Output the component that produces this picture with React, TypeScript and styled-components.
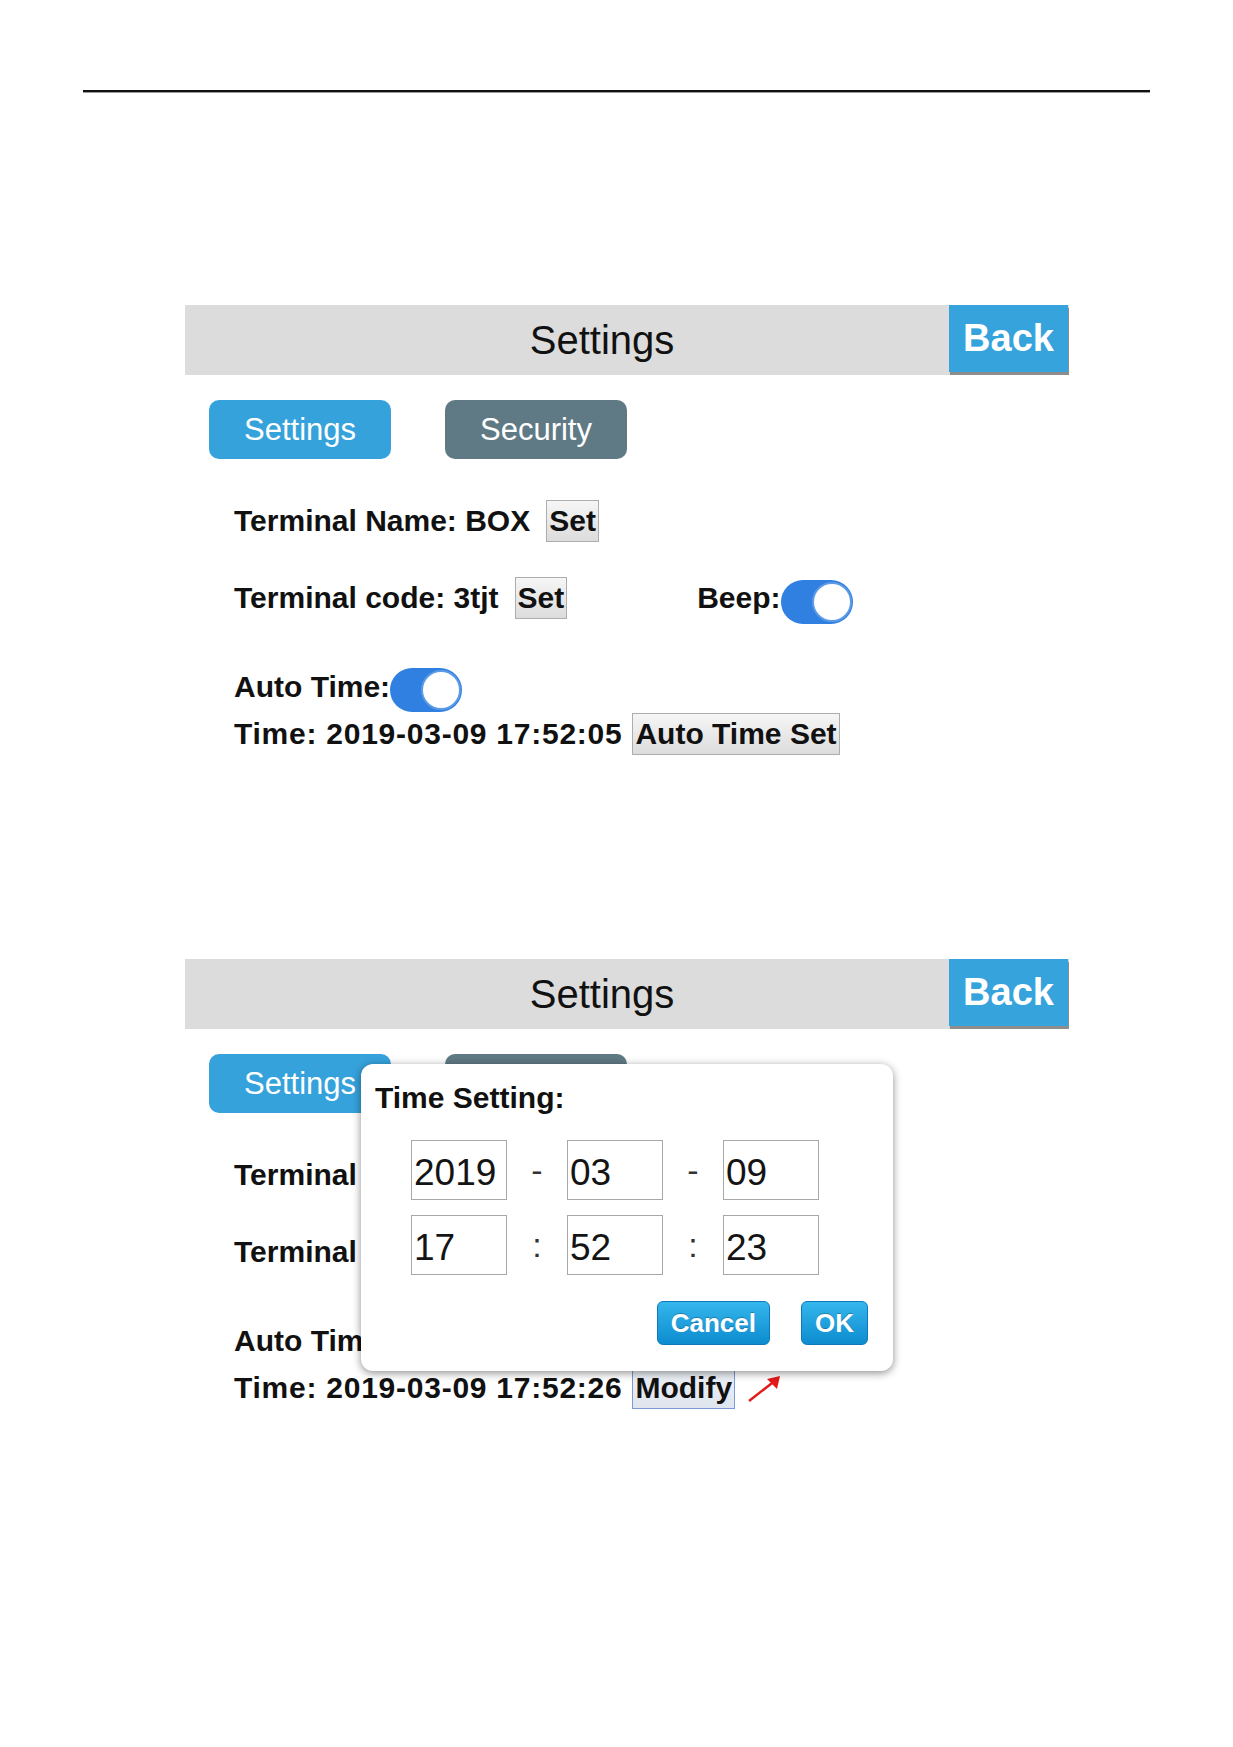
import React from "react";
import styled, { createGlobalStyle } from "styled-components";

const GlobalStyle = createGlobalStyle`
  html, body {
    margin: 0;
    padding: 0;
    background: #ffffff;
  }
  body {
    font-family: "Liberation Sans", Arial, sans-serif;
    color: #111111;
  }
  button {
    font-family: "Liberation Sans", Arial, sans-serif;
    cursor: pointer;
  }
`;

const Page = styled.div`
  width: 1233px;
  min-height: 1747px;
  box-sizing: border-box;
  padding-top: 90px;
`;

const Rule = styled.hr`
  margin: 0 0 0 83px;
  width: 1067px;
  height: 2px;
  border: none;
  background: #111111;
  border-bottom: 1px solid #9a9a9a;
`;

const Panel = styled.section<{ $top: number }>`
  position: relative;
  margin: ${(p) => p.$top}px 0 0 185px;
  width: 884px;
`;

const HeaderBar = styled.header`
  display: flex;
  height: 70px;
  background: #dcdcdc;
`;

const Title = styled.h1`
  flex: 1;
  margin: 0;
  padding-left: 70px;
  font-size: 40px;
  font-weight: 400;
  line-height: 70px;
  text-align: center;
  color: #111111;
`;

const BackButton = styled.button`
  width: 119px;
  height: 67px;
  margin-right: 1px;
  padding: 0;
  border: none;
  background: #36a3dd;
  color: #ffffff;
  font-size: 38px;
  font-weight: 700;
  box-shadow: 1px 3px 0 #8d8d8d;
`;

const Tabs = styled.nav`
  display: flex;
  gap: 54px;
  margin-top: 25px;
  padding-left: 24px;
`;

const Tab = styled.button<{ $active?: boolean }>`
  width: 182px;
  height: 59px;
  padding: 0;
  border: none;
  border-radius: 10px;
  background: ${(p) => (p.$active ? "#36a2dc" : "#5f7a84")};
  color: #ffffff;
  font-size: 31px;
  font-weight: 400;
`;

const Content = styled.div`
  display: flex;
  flex-direction: column;
  padding-left: 49px;
`;

const Row = styled.div<{ $gap: number; $h: number }>`
  display: flex;
  align-items: center;
  height: ${(p) => p.$h}px;
  margin-top: ${(p) => p.$gap}px;
`;

const Label = styled.span<{ $wide?: boolean }>`
  font-size: 30px;
  font-weight: 700;
  white-space: pre;
  letter-spacing: ${(p) => (p.$wide ? "0.75px" : "0")};
  color: #111111;
`;

const PlainButton = styled.button<{ $gap: number; $focus?: boolean }>`
  box-sizing: border-box;
  height: 42px;
  margin-left: ${(p) => p.$gap}px;
  padding: 0 2px;
  border: 1px solid ${(p) => (p.$focus ? "#7b9bd6" : "#adadad")};
  background: ${(p) =>
    p.$focus
      ? "linear-gradient(#eef2f8, #dfe5ee)"
      : "linear-gradient(#f6f6f6, #dcdcdc)"};
  color: #111111;
  font-size: 30px;
  font-weight: 700;
  line-height: 38px;
`;

const Group = styled.div<{ $gap: number }>`
  display: flex;
  align-items: center;
  margin-left: ${(p) => p.$gap}px;
`;

const Track = styled.span`
  position: relative;
  display: inline-block;
  width: 72px;
  height: 44px;
  margin-top: 7px;
  border-radius: 22px;
  background: #2f80e1;
`;

const Knob = styled.span`
  position: absolute;
  top: 2px;
  right: 1px;
  width: 36px;
  height: 36px;
  border-radius: 50%;
  background: #ffffff;
  border: 2px solid #5d9be6;
`;

const Arrow = styled.svg`
  margin-left: 12px;
  margin-top: 2px;
`;

const Dialog = styled.div`
  position: absolute;
  left: 176px;
  top: 105px;
  z-index: 2;
  box-sizing: border-box;
  width: 532px;
  height: 307px;
  display: flex;
  flex-direction: column;
  padding: 17px 25px 26px 14px;
  background: #ffffff;
  border-radius: 12px;
  box-shadow: 0 2px 9px rgba(0, 0, 0, 0.45);
`;

const DialogTitle = styled.div`
  font-size: 30px;
  font-weight: 700;
  line-height: 34px;
`;

const FieldGrid = styled.div`
  display: grid;
  grid-template-columns: 96px 60px 96px 60px 96px;
  row-gap: 15px;
  margin: 25px 0 0 36px;
`;

const Field = styled.div`
  box-sizing: border-box;
  height: 60px;
  padding: 5px 0 0 2px;
  border: 1px solid #a8a8a8;
  font-size: 37px;
  line-height: 53px;
  color: #141414;
`;

const Separator = styled.span`
  font-size: 34px;
  line-height: 60px;
  text-align: center;
  color: #333333;
`;

const Actions = styled.div`
  display: flex;
  justify-content: flex-end;
  gap: 31px;
  margin-top: auto;
`;

const ActionButton = styled.button`
  box-sizing: border-box;
  height: 44px;
  padding: 0 13px;
  border: 1px solid #0b79ba;
  border-radius: 6px;
  background: linear-gradient(#35b6ec, #0c8ccf);
  color: #ffffff;
  font-size: 26px;
  font-weight: 700;
  text-shadow: 0 -1px 0 rgba(0, 0, 0, 0.25);
`;

const Toggle = () => (
  <Track>
    <Knob />
  </Track>
);

const TimeDialog = () => (
  <Dialog>
    <DialogTitle>Time Setting:</DialogTitle>
    <FieldGrid>
      <Field>2019</Field>
      <Separator>-</Separator>
      <Field>03</Field>
      <Separator>-</Separator>
      <Field>09</Field>
      <Field>17</Field>
      <Separator>:</Separator>
      <Field>52</Field>
      <Separator>:</Separator>
      <Field>23</Field>
    </FieldGrid>
    <Actions>
      <ActionButton>Cancel</ActionButton>
      <ActionButton>OK</ActionButton>
    </Actions>
  </Dialog>
);

type SettingsPanelProps = {
  top: number;
  time: string;
  action: string;
  editing?: boolean;
};

const SettingsPanel = ({ top, time, action, editing }: SettingsPanelProps) => (
  <Panel $top={top}>
    <HeaderBar>
      <Title>Settings</Title>
      <BackButton>Back</BackButton>
    </HeaderBar>
    <Tabs>
      <Tab $active>Settings</Tab>
      <Tab>Security</Tab>
    </Tabs>
    <Content>
      <Row $gap={41} $h={42}>
        <Label>Terminal Name: BOX</Label>
        <PlainButton $gap={16}>Set</PlainButton>
      </Row>
      <Row $gap={34} $h={44}>
        <Label>Terminal code: 3tjt</Label>
        <PlainButton $gap={16}>Set</PlainButton>
        <Group $gap={130}>
          <Label>Beep:</Label>
          <Toggle />
        </Group>
      </Row>
      <Row $gap={45} $h={43}>
        <Label>Auto Time:</Label>
        <Toggle />
      </Row>
      <Row $gap={5} $h={42}>
        <Label $wide>{time}</Label>
        <PlainButton $gap={10} $focus={editing}>
          {action}
        </PlainButton>
        {editing && (
          <Arrow width="36" height="30" viewBox="0 0 36 30">
            <path d="M2 27 L29 6" stroke="#e21a1a" strokeWidth="2.4" fill="none" />
            <path d="M33 2 L20 5 L30 15 Z" fill="#e21a1a" />
          </Arrow>
        )}
      </Row>
    </Content>
    {editing && <TimeDialog />}
  </Panel>
);

export default function App() {
  return (
    <Page>
      <GlobalStyle />
      <Rule />
      <SettingsPanel top={212} time="Time: 2019-03-09 17:52:05" action="Auto Time Set" />
      <SettingsPanel top={204} time="Time: 2019-03-09 17:52:26" action="Modify" editing />
    </Page>
  );
}
